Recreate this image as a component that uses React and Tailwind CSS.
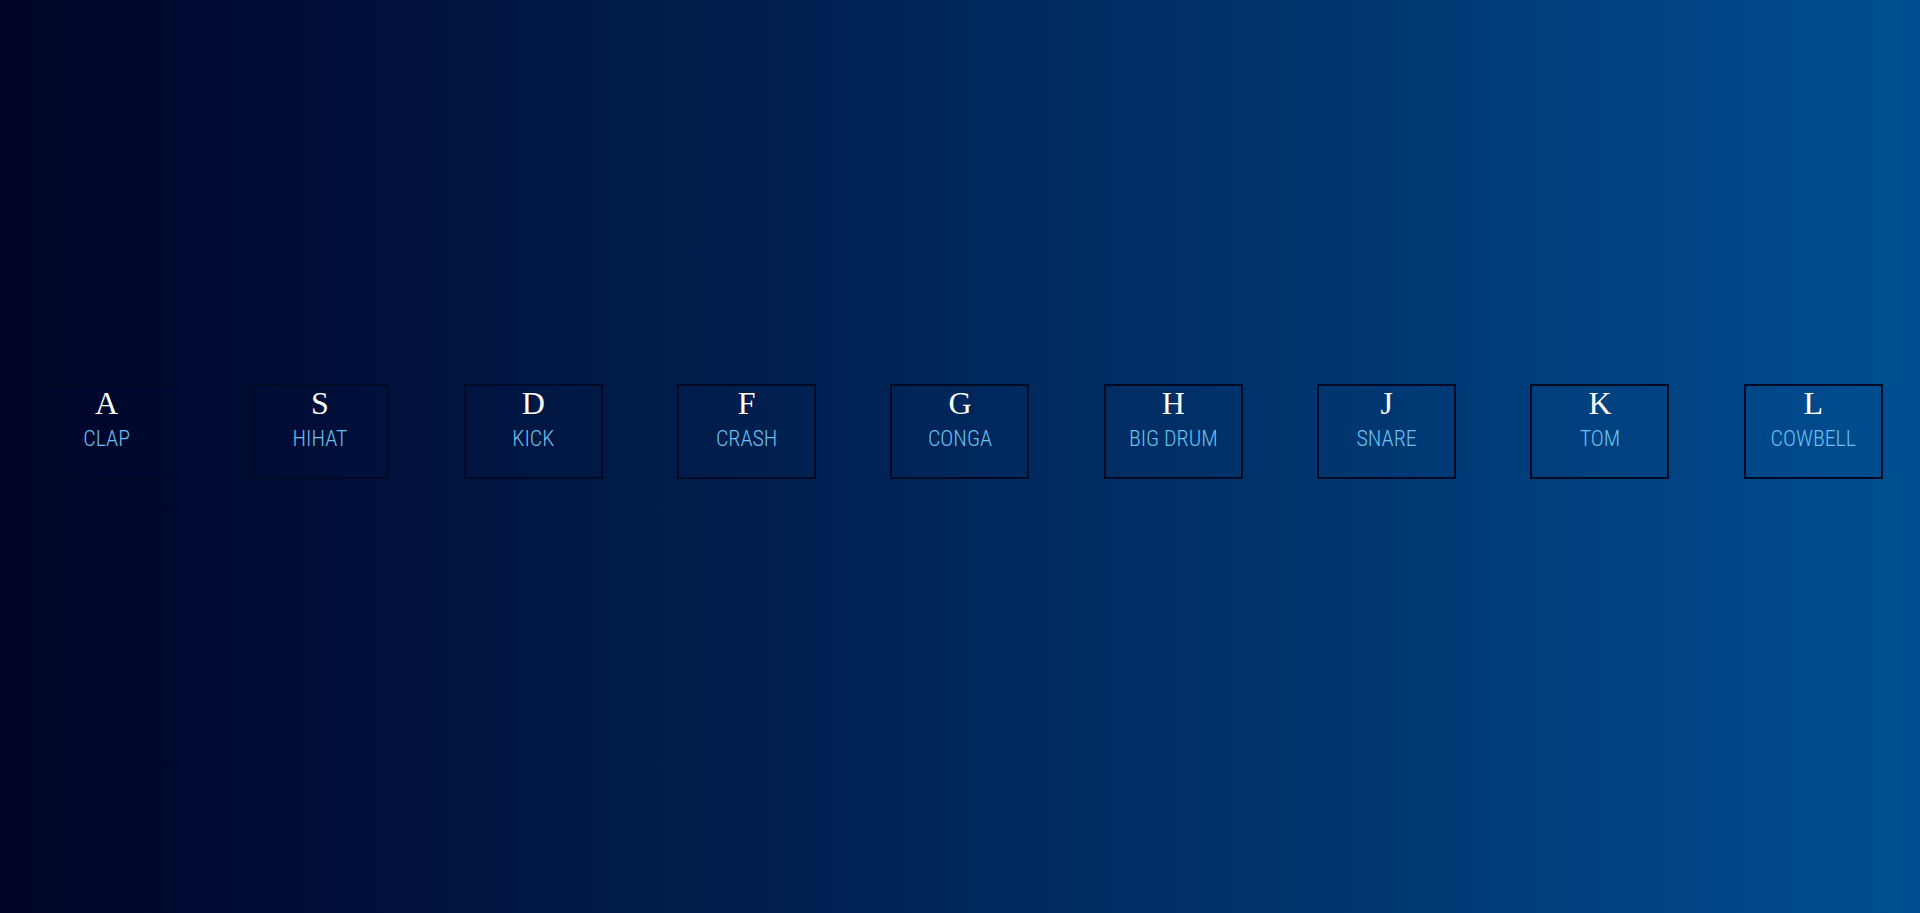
const pads = [
  { key: "A", name: "CLAP" },
  { key: "S", name: "HIHAT" },
  { key: "D", name: "KICK" },
  { key: "F", name: "CRASH" },
  { key: "G", name: "CONGA" },
  { key: "H", name: "BIG DRUM" },
  { key: "J", name: "SNARE" },
  { key: "K", name: "TOM" },
  { key: "L", name: "COWBELL" },
];

export default function App() {
  return (
    <div className="h-[913px] w-full bg-gradient-to-r from-[#000428] to-[#004e92] pt-[384px]">
      <div className="flex justify-around">
        {pads.map((p) => (
          <div
            key={p.key}
            className="w-[139px] h-[95px] border-2 border-[#000a24] flex flex-col items-center text-center"
          >
            <kbd className="block text-[32px] leading-[36px] -mt-[1px] text-white font-['Liberation_Serif',serif]">
              {p.key}
            </kbd>
            <span className="block text-[22px] leading-[26px] mt-[5px] font-light text-[#6cc0f0] font-['Liberation_Sans_Narrow','Roboto_Condensed',sans-serif]">
              {p.name}
            </span>
          </div>
        ))}
      </div>
    </div>
  );
}
